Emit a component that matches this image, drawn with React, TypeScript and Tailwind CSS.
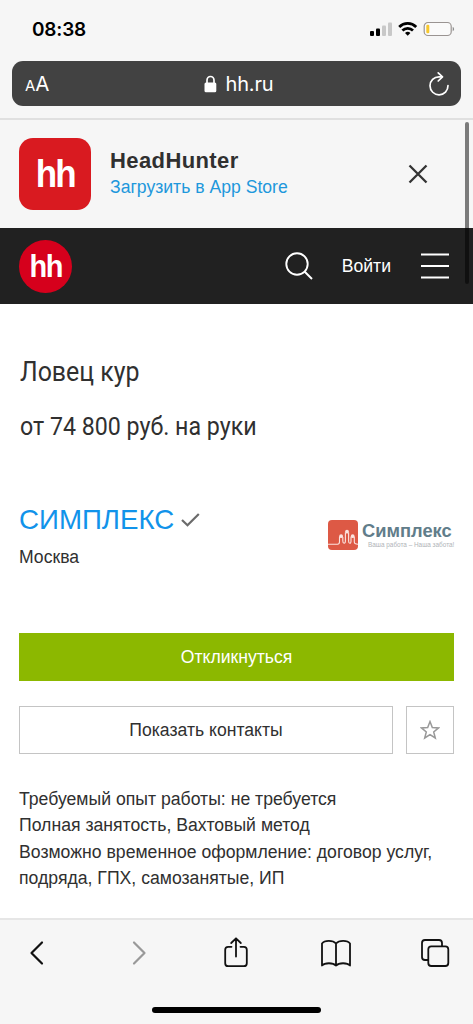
import type { ReactNode } from "react";

const details = [
  "Требуемый опыт работы: не требуется",
  "Полная занятость, Вахтовый метод",
  "Возможно временное оформление: договор услуг,",
  "подряда, ГПХ, самозанятые, ИП",
];

function StatusBar() {
  return (
    <div className="flex h-[61px] items-start justify-between pt-[18px] pr-[18px] pl-8">
      <span className="font-['Inter',sans-serif] text-[19px] leading-6 font-semibold tracking-[-0.2px] text-black">
        08:38
      </span>
      <svg width="85" height="16" viewBox="0 0 85 16" className="mt-[3px]">
        <rect x="0" y="10" width="4" height="5" rx="1" fill="#000" />
        <rect x="6" y="7.5" width="4" height="7.5" rx="1" fill="#000" />
        <rect x="12" y="4.5" width="4" height="10.5" rx="1" fill="#c8c8c8" />
        <rect x="18" y="1.5" width="4" height="13.5" rx="1" fill="#c8c8c8" />
        <g fill="none" stroke="#000" strokeWidth="2.8">
          <path d="M29.2 5.9a12.2 12.2 0 0 1 17 0" />
          <path d="M32.4 9.4a7.7 7.7 0 0 1 10.6 0" />
        </g>
        <path d="M37.7 14.8l-2.7-2.9a4 4 0 0 1 5.4 0z" fill="#000" />
        <rect x="54.2" y="1.5" width="27" height="13" rx="3.8" fill="#fafafa" stroke="#9a9492" strokeWidth="1.2" />
        <rect x="56.3" y="3.8" width="3" height="8.5" rx="1.2" fill="#f7c82d" />
        <path d="M82.7 6v4.2c1-.4 1.4-1.2 1.4-2.1s-.4-1.7-1.4-2.1z" fill="#8d8d8d" />
      </svg>
    </div>
  );
}

function AddressBar() {
  return (
    <div className="mx-3 flex h-[45px] items-center justify-between rounded-[11px] bg-[#424242] pr-[11px] pl-[13px] font-['Inter',sans-serif] text-white">
      <div className="flex w-[60px] items-baseline pt-[2px] leading-6">
        <span className="text-[15px]">A</span>
        <span className="text-[20.5px]">A</span>
      </div>
      <div className="flex items-center gap-[9px]">
        <svg width="13" height="18" viewBox="0 0 13 18">
          <path d="M3 8V5.3a3.5 3.8 0 0 1 7 0V8" fill="none" stroke="#fff" strokeWidth="1.7" />
          <rect x="0.5" y="7.5" width="11.8" height="9.8" rx="1.5" fill="#fff" />
        </svg>
        <span className="text-[20px] leading-6 tracking-[-0.2px]">hh.ru</span>
      </div>
      <div className="flex w-[58px] justify-end">
        <svg width="22" height="26" viewBox="0 0 22 26" fill="none" stroke="#fff" strokeWidth="1.7" strokeLinecap="round" strokeLinejoin="round">
          <path d="M13.5 5.8H11A9 9 0 1 0 20 14.6" />
          <path d="M10.2 1.8l4.3 4-4.3 4.2" />
        </svg>
      </div>
    </div>
  );
}

function AppBanner() {
  return (
    <div className="flex h-[110px] items-center border-t-2 border-[#e0e0e0] pl-[19px]">
      <div className="flex size-[72px] items-center justify-center rounded-[14px] bg-[#d91a20]">
        <span className="scale-x-[0.92] font-['Liberation_Sans',sans-serif] text-[38px] leading-[72px] font-bold tracking-[-2px] text-white">
          hh
        </span>
      </div>
      <div className="ml-[19px] flex-1 font-['Liberation_Sans',Arial,sans-serif]">
        <div className="text-[22px] leading-[26px] font-bold tracking-[0.4px] text-[#303030]">HeadHunter</div>
        <div className="text-[17.6px] leading-[26px] text-[#1e98dc]">Загрузить в App Store</div>
      </div>
      <svg width="20" height="20" viewBox="0 0 20 20" className="mr-[45px]">
        <path d="M1.5 1.5l17 17M18.5 1.5l-17 17" stroke="#333" strokeWidth="2.3" />
      </svg>
    </div>
  );
}

function SiteHeader() {
  return (
    <header className="flex h-[76px] items-center bg-[#212121] pr-6 pl-[19px]">
      <div className="flex size-[53px] items-center justify-center rounded-full bg-[#d6001c]">
        <span className="scale-x-[0.92] pt-px font-['Liberation_Sans',sans-serif] text-[31.5px] font-bold tracking-[-1.6px] text-white">
          hh
        </span>
      </div>
      <svg width="28" height="28" viewBox="0 0 28 28" fill="none" stroke="#fff" strokeWidth="1.9" className="ml-auto">
        <circle cx="12" cy="12" r="10.7" />
        <path d="M19.5 19.5l7.5 7.5" />
      </svg>
      <span className="ml-[29px] pt-px font-['Liberation_Sans',Arial,sans-serif] text-[17.6px] text-white">Войти</span>
      <svg width="28" height="26" viewBox="0 0 28 26" className="ml-[30px]">
        <path d="M0 1.5h28M0 13h28M0 24.5h28" stroke="#fff" strokeWidth="1.9" />
      </svg>
    </header>
  );
}

function CompanyLogo() {
  return (
    <div className="mt-[18px] flex w-[126px] items-start">
      <svg width="30" height="30" viewBox="0 0 30 30" className="shrink-0">
        <rect width="30" height="30" rx="4" fill="#dd5945" />
        <path
          d="M0 24.2h9.5q2 0 2-2.5V17M14.8 17v4q0 2.2 1.3 2.2t1.3-2.2V12.5M20.6 12.5V21q0 2.2 1.2 2.2T23 21v-4M26.3 17v5q0 2.2 3.7 2.2"
          fill="none"
          stroke="#fbe4df"
          strokeWidth="1.1"
        />
        <g fill="#fbe4df">
          <circle cx="13.1" cy="16.2" r="1.9" />
          <circle cx="19" cy="11.7" r="1.9" />
          <circle cx="24.7" cy="16.2" r="1.9" />
        </g>
      </svg>
      <div className="ml-[4px] whitespace-nowrap">
        <div className="font-['Liberation_Sans',Arial,sans-serif] text-[18.3px] leading-[21px] font-bold text-[#617d8a]">
          Симплекс
        </div>
        <div className="ml-[6px] font-['Liberation_Sans',Arial,sans-serif] text-[6.4px] leading-[7px] text-[#b0b4b8]">
          Ваша работа – Наша забота!
        </div>
      </div>
    </div>
  );
}

function ToolButton({ children }: { children: ReactNode }) {
  return (
    <svg width="32" height="32" viewBox="0 0 32 32" fill="none" stroke="#111" strokeWidth="1.8" strokeLinecap="round" strokeLinejoin="round">
      {children}
    </svg>
  );
}

function Toolbar() {
  return (
    <footer className="h-[106px] border-t-2 border-[#e6e6e6] bg-[#f6f6f6]">
      <div className="flex justify-between pt-[17px] pr-[22px] pl-[21px]">
        <ToolButton>
          <path d="M21 5.5L10.5 16 21 26.5" strokeWidth="2.2" />
        </ToolButton>
        <ToolButton>
          <path d="M13 5.5L23.5 16 13 26.5" stroke="#999" strokeWidth="2.2" />
        </ToolButton>
        <ToolButton>
          <path d="M11.5 9.8H8.2A3 3 0 0 0 5.2 12.8v13.4a3 3 0 0 0 3 3h15.6a3 3 0 0 0 3-3V12.8a3 3 0 0 0-3-3h-3.3M16 19.5V1.5M11.2 6L16 1.3 20.8 6" />
        </ToolButton>
        <ToolButton>
          <path d="M16 6.5C13 3 4.5 3 2 6.5v22c2.800-3 11-3 14 0 3-3 11.200-3 14 0v-22C27.500 3 19 3 16 6.500zM16 6.500v22" />
        </ToolButton>
        <ToolButton>
          <path d="M9 23H6a3 3 0 0 1-3-3V6a3 3 0 0 1 3-3h14a3 3 0 0 1 3 3v3" />
          <rect x="9.3" y="9.3" width="20" height="19.7" rx="3" />
        </ToolButton>
      </div>
      <div className="mx-auto mt-[38px] h-[6px] w-[169px] rounded-full bg-black" />
    </footer>
  );
}

export default function App() {
  return (
    <div className="relative flex h-[1024px] w-[473px] flex-col overflow-hidden bg-[#f6f6f6]">
      <StatusBar />
      <AddressBar />
      <div className="h-3" />
      <AppBanner />
      <SiteHeader />
      <main className="flex-1 bg-white px-[19px] pt-[49px] font-['Liberation_Sans',Arial,sans-serif] text-[#303030]">
        <h1 className="ml-px origin-left scale-x-[0.9] font-['Roboto',sans-serif] text-[27.7px] leading-[38px] whitespace-nowrap">
          Ловец кур
        </h1>
        <p className="mt-[16px] ml-px origin-left scale-x-[0.875] font-['Roboto',sans-serif] text-[26.5px] leading-[38px] whitespace-nowrap">
          от 74 800 руб. на руки
        </p>

        <div className="mt-[57px] flex h-[131px] justify-between">
          <div>
            <div className="flex items-center">
              <span className="text-[27.7px] leading-[36px] text-[#1193ea]">СИМПЛЕКС</span>
              <svg width="19" height="14" viewBox="0 0 19 14" className="ml-[7px]">
                <path d="M1 7l5.5 5.3L17.8 1" fill="none" stroke="#6b6b6b" strokeWidth="2.2" />
              </svg>
            </div>
            <div className="mt-[6px] text-[17.6px] leading-[26px]">Москва</div>
          </div>
          <CompanyLogo />
        </div>

        <button className="block h-12 w-full bg-[#8cb800] text-[17.6px] text-white">Откликнуться</button>
        <div className="mt-[25px] flex gap-[13px]">
          <button className="h-12 flex-1 border border-[#c4c4c4] text-[17.6px]">Показать контакты</button>
          <button className="flex size-12 items-center justify-center border border-[#c4c4c4]">
            <svg width="20" height="20" viewBox="0 0 20 20">
              <path
                d="M10 1.6l2.3 5.9 6.2.4-4.8 4 1.6 6.1L10 14.6 4.7 18l1.6-6.1-4.8-4 6.2-.4z"
                fill="none"
                stroke="#999"
                strokeWidth="1.5"
              />
            </svg>
          </button>
        </div>

        <div className="mt-[32px] text-[17.65px] leading-[26.4px] whitespace-nowrap">
          {details.map((line) => (
            <p key={line}>{line}</p>
          ))}
        </div>
      </main>
      <Toolbar />

      {/* page scroll thumb */}
      <div className="absolute top-[122px] right-[4px] h-[162px] w-[4px] rounded-full bg-black/50" />
    </div>
  );
}
